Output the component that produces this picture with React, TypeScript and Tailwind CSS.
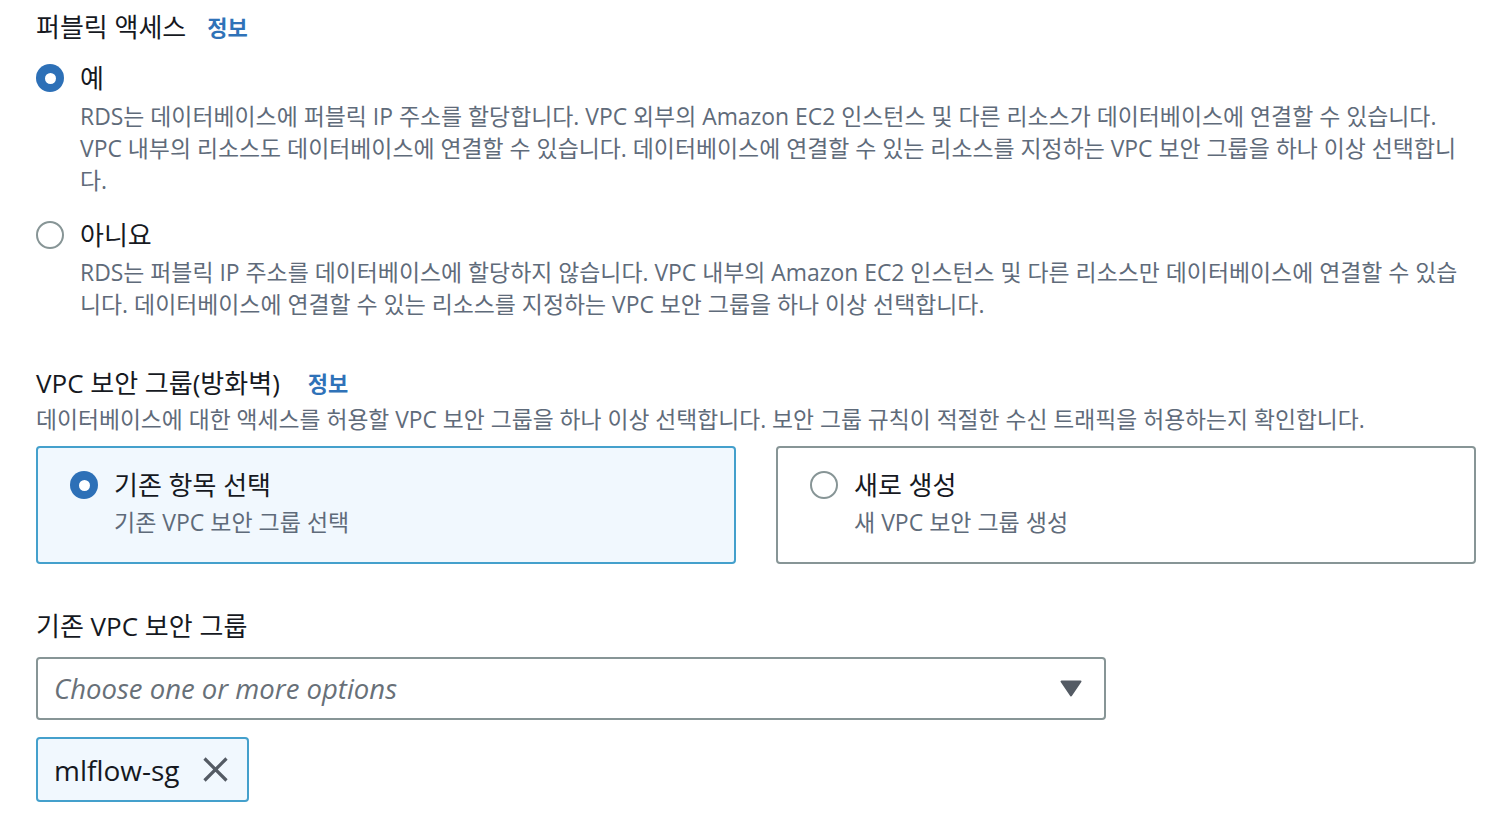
import React, { useState } from 'react';

const font = { fontFamily: '"Open Sans", "Noto Sans CJK KR", sans-serif' };

const Radio: React.FC<{ checked: boolean }> = ({ checked }) =>
  checked ? (
    <span className="w-[28px] h-[28px] rounded-full bg-[#2d70b7] flex items-center justify-center shrink-0">
      <span className="w-[11px] h-[11px] rounded-full bg-white" />
    </span>
  ) : (
    <span className="w-[28px] h-[28px] rounded-full border-2 border-[#879596] bg-white shrink-0" />
  );

const Info: React.FC<{ gap?: string }> = ({ gap = 'ml-[20px]' }) => (
  <span className={`${gap} text-[22px] font-bold text-[#2f72b8]`}>정보</span>
);

const App: React.FC = () => {
  const [publicAccess, setPublicAccess] = useState<'yes' | 'no'>('yes');
  const [sgMode, setSgMode] = useState<'existing' | 'new'>('existing');

  return (
    <div className="min-h-screen bg-white text-[#16191f] pl-[36px] pt-[11px]" style={font}>
      {/* 퍼블릭 액세스 */}
      <div className="flex items-center text-[26px] leading-[32px]">
        퍼블릭 액세스 <Info gap="ml-[21px]" />
      </div>

      <div className="mt-[19px] flex flex-col gap-[22px]">
        <div onClick={() => setPublicAccess('yes')} className="cursor-pointer">
          <div className="flex items-center gap-[16px] text-[26px] leading-[32px]">
            <Radio checked={publicAccess === 'yes'} />
            <span>예</span>
          </div>
          <p className="mt-[7px] ml-[44px] w-[1386px] text-[22.9px] leading-[32px] text-[#5f6b7a]">
            RDS는 데이터베이스에 퍼블릭 IP 주소를 할당합니다. VPC 외부의 Amazon EC2 인스턴스 및 다른 리소스가 데이터베이스에 연결할 수 있습니다. VPC 내부의 리소스도 데이터베이스에 연결할 수 있습니다. 데이터베이스에 연결할 수 있는 리소스를 지정하는 VPC 보안 그룹을 하나 이상 선택합니다.
          </p>
        </div>
        <div onClick={() => setPublicAccess('no')} className="cursor-pointer">
          <div className="flex items-center gap-[16px] text-[26px] leading-[32px]">
            <Radio checked={publicAccess === 'no'} />
            <span>아니요</span>
          </div>
          <p className="mt-[6px] ml-[44px] w-[1386px] text-[22.9px] leading-[32px] text-[#5f6b7a]">
            RDS는 퍼블릭 IP 주소를 데이터베이스에 할당하지 않습니다. VPC 내부의 Amazon EC2 인스턴스 및 다른 리소스만 데이터베이스에 연결할 수 있습니다. 데이터베이스에 연결할 수 있는 리소스를 지정하는 VPC 보안 그룹을 하나 이상 선택합니다.
          </p>
        </div>
      </div>

      {/* VPC 보안 그룹 */}
      <div className="mt-[46px] flex items-center text-[26px] leading-[32px]">
        VPC 보안 그룹(방화벽) <Info gap="ml-[28px]" />
      </div>
      <p className="mt-[5px] text-[22.8px] leading-[32px] text-[#5f6b7a]">
        데이터베이스에 대한 액세스를 허용할 VPC 보안 그룹을 하나 이상 선택합니다. 보안 그룹 규칙이 적절한 수신 트래픽을 허용하는지 확인합니다.
      </p>

      <div className="mt-[10px] grid grid-cols-2 gap-[40px] w-[1440px]">
        {[
          { key: 'existing' as const, title: '기존 항목 선택', sub: '기존 VPC 보안 그룹 선택' },
          { key: 'new' as const, title: '새로 생성', sub: '새 VPC 보안 그룹 생성' },
        ].map((c) => {
          const on = sgMode === c.key;
          return (
            <div
              key={c.key}
              onClick={() => setSgMode(c.key)}
              className={`h-[118px] rounded-[4px] border-2 px-[32px] pt-[21px] cursor-pointer ${
                on ? 'border-[#44a0cc] bg-[#f1f8fe]' : 'border-[#879596] bg-white'
              }`}
            >
              <div className="flex items-center gap-[16px] text-[26px] leading-[32px]">
                <Radio checked={on} />
                <span>{c.title}</span>
              </div>
              <div className="mt-[5px] ml-[44px] text-[23px] leading-[32px] text-[#5f6b7a]">{c.sub}</div>
            </div>
          );
        })}
      </div>

      {/* 기존 VPC 보안 그룹 */}
      <div className="mt-[46px] text-[26px] leading-[32px]">기존 VPC 보안 그룹</div>
      <div className="mt-[15px] w-[1070px] h-[63px] rounded-[4px] border-2 border-[#879596] bg-white flex items-center pl-[16px] pr-[22px]">
        <span className="flex-1 italic text-[27.5px] text-[#687078]">Choose one or more options</span>
        <svg width="22" height="17" viewBox="0 0 22 17">
          <path d="M1.5 1.5 H20.5 L11 15.5 Z" fill="#545b64" stroke="#545b64" strokeWidth="2" strokeLinejoin="round" />
        </svg>
      </div>

      <div className="mt-[17px] inline-flex items-center h-[65px] rounded-[4px] border-2 border-[#44a0cc] bg-[#f1f8fe] pl-[16px] pr-[18px] gap-[22px]">
        <span className="text-[28px]">mlflow-sg</span>
        <svg width="27" height="27" viewBox="0 0 27 27">
          <path d="M2.5 2.5 L24.5 24.5 M24.5 2.5 L2.5 24.5" stroke="#545b64" strokeWidth="3.2" />
        </svg>
      </div>
    </div>
  );
};

export default App;
